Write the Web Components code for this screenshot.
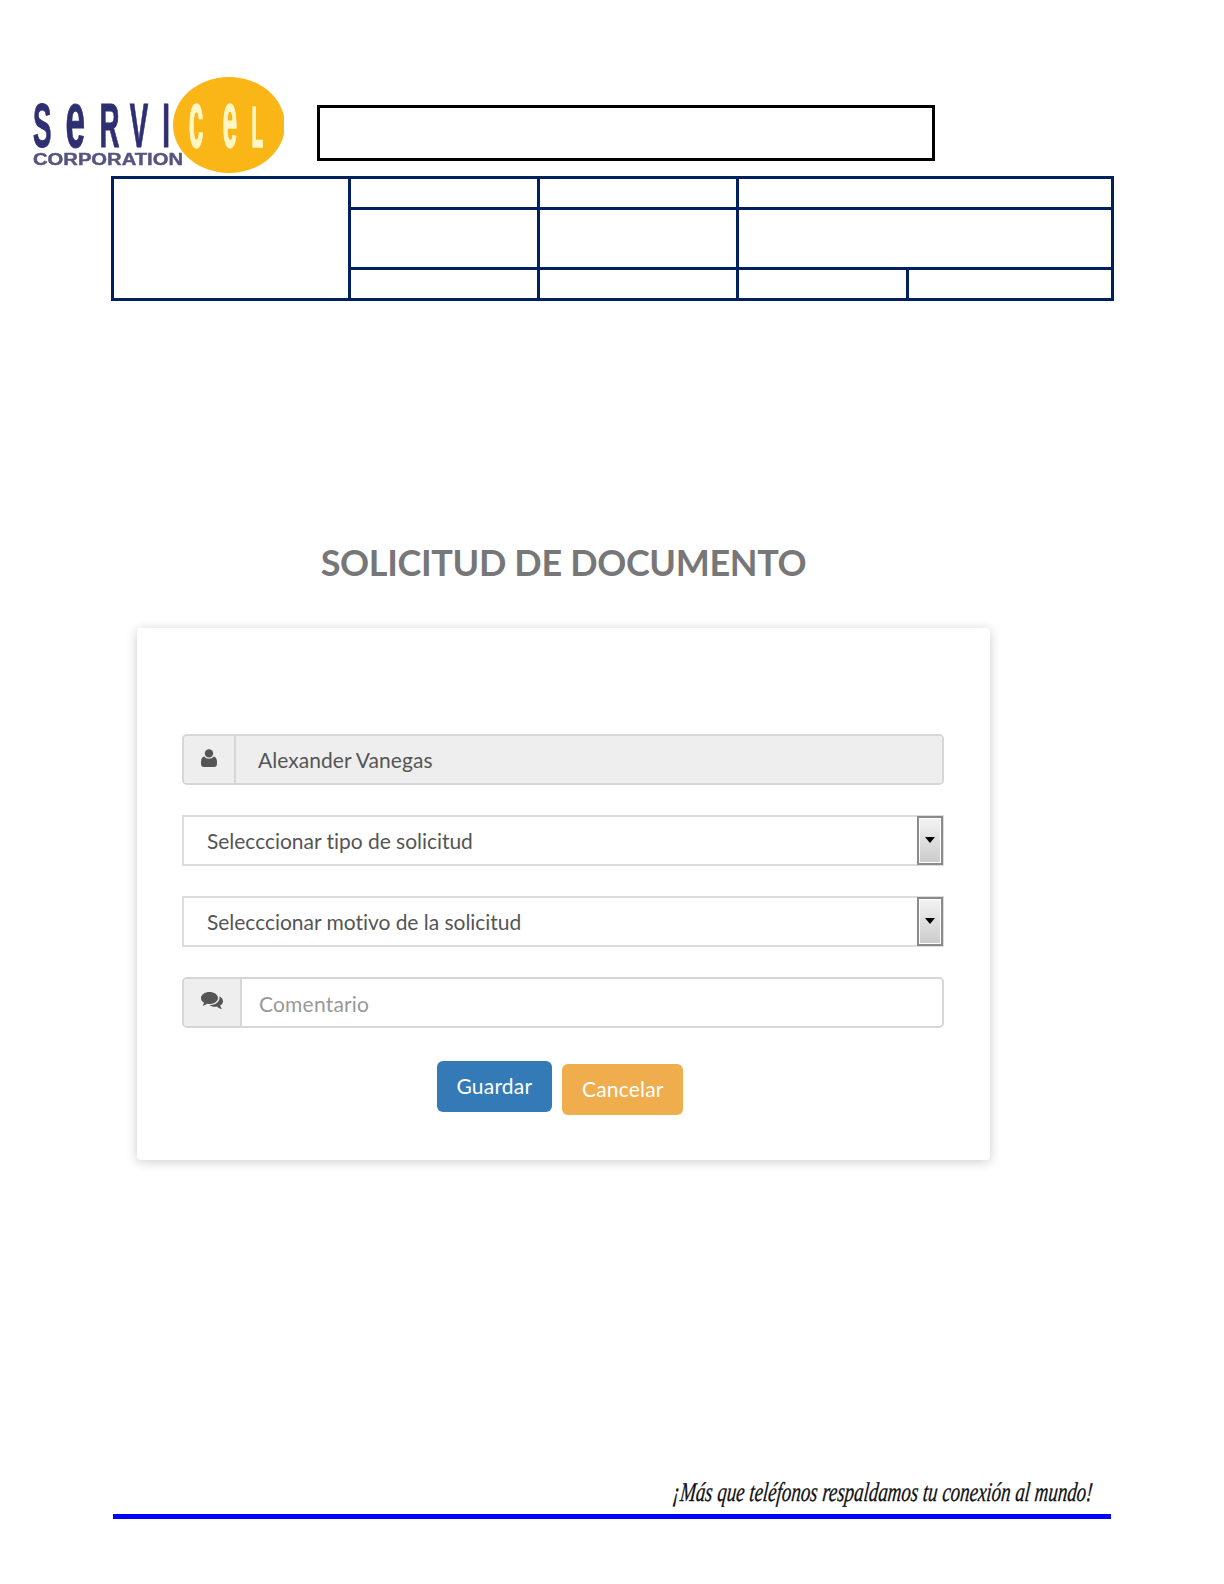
<!DOCTYPE html>
<html lang="es">
<head>
<meta charset="utf-8">
<title>Solicitud de documento</title>
<style>
  html, body { margin: 0; background: #fff; }
</style>
</head>
<body>
<doc-page>
  <doc-header></doc-header>
  <doc-grid></doc-grid>
  <form-card heading="SOLICITUD DE DOCUMENTO">
    <form-field icon="user" value="Alexander Vanegas" readonly></form-field>
    <select-field>Selecccionar tipo de solicitud</select-field>
    <select-field>Selecccionar motivo de la solicitud</select-field>
    <form-field icon="comments" placeholder="Comentario"></form-field>
    <div slot="actions">
      <ui-button kind="primary">Guardar</ui-button>
      <ui-button kind="warning">Cancelar</ui-button>
    </div>
  </form-card>
  <doc-footer>¡Más que teléfonos respaldamos tu conexión al mundo!</doc-footer>
</doc-page>

<script>
class DocPage extends HTMLElement {
  constructor() {
    super();
    this.attachShadow({ mode: 'open' });
    this.shadowRoot.innerHTML = `
      <style>
        :host { display: block; width: 1224px; height: 1584px; padding-top: 57px; box-sizing: border-box; overflow: hidden; }
      </style>
      <slot></slot>`;
  }
}

class DocHeader extends HTMLElement {
  constructor() {
    super();
    this.attachShadow({ mode: 'open' });
    this.shadowRoot.innerHTML = `
      <style>
        :host { display: flex; height: 116px; padding-left: 32px; }
        svg { display: block; flex-shrink: 0; }
        .box { width: 618px; height: 56px; box-sizing: border-box; margin: 48px 0 0 33px; border: 3px solid #000; }
        text { font-family: "Liberation Sans", sans-serif; font-weight: 700; }
      </style>
      <svg width="252" height="116" viewBox="32 57 252 116" aria-label="Servicel Corporation">
        <defs><filter id="soft" x="-5%" y="-5%" width="110%" height="110%"><feGaussianBlur stdDeviation="0.7"/></filter></defs>
        <g filter="url(#soft)">
          <g transform="scale(.44 1)" fill="#2f2e73" stroke="#2f2e73" stroke-width="1">
            <text y="147" font-size="63"><tspan x="75">S</tspan><tspan x="149" font-size="80">e</tspan><tspan x="226">R</tspan><tspan x="295">V</tspan><tspan x="369">I</tspan></text>
          </g>
          <text x="33" y="164.500" font-size="16" fill="#55547f" stroke="#55547f" stroke-width=".4" textLength="150" lengthAdjust="spacingAndGlyphs">CORPORATION</text>
          <ellipse cx="229" cy="125" rx="56" ry="48" fill="#f9b617"/>
          <g transform="scale(.33 1)" fill="#fff6c4" stroke="#fff6c4" stroke-width="1.500">
            <text y="147" font-size="80"><tspan x="572">c</tspan><tspan x="674">e</tspan><tspan x="762" font-size="58">L</tspan></text>
          </g>
        </g>
      </svg>
      <div class="box"></div>`;
  }
}

class DocGrid extends HTMLElement {
  constructor() {
    super();
    this.attachShadow({ mode: 'open' });
    this.shadowRoot.innerHTML = `
      <style>
        :host {
          display: grid;
          grid-template-columns: 234px 186px 196px 167px 202px;
          grid-template-rows: 28px 57px 28px;
          gap: 3px;
          width: 1003px;
          height: 125px;
          box-sizing: border-box;
          margin: 3px 0 0 111px;
          padding: 3px;
          background: #002060;
        }
        div { background: #fff; }
        .logo { grid-row: span 3; }
        .wide { grid-column: span 2; }
      </style>
      <div class="logo"></div>
      <div></div><div></div><div class="wide"></div>
      <div></div><div></div><div class="wide"></div>
      <div></div><div></div><div></div><div></div>`;
  }
}

class FormCard extends HTMLElement {
  constructor() {
    super();
    this.attachShadow({ mode: 'open' });
    this.shadowRoot.innerHTML = `
      <style>
        :host { display: block; width: 853px; margin: 241px 0 0 137px; font-family: Lato, sans-serif; }
        h1 { margin: 0 0 46px; font-size: 36px; line-height: 40px; font-weight: 700; letter-spacing: -.35px; color: #777; text-align: center; }
        .card {
          height: 532px;
          box-sizing: border-box;
          padding: 106px 46px 0 45px;
          background: #fff;
          border-radius: 4px;
          box-shadow: 0 2px 12px rgba(0,0,0,.2);
        }
        .fields { display: flex; flex-direction: column; gap: 30px; }
        .actions { margin: 33px 0 0 255px; }
      </style>
      <h1></h1>
      <div class="card">
        <div class="fields"><slot></slot></div>
        <div class="actions"><slot name="actions"></slot></div>
      </div>`;
    this.shadowRoot.querySelector('h1').textContent = this.getAttribute('heading');
  }
}

const ICONS = {
  user: `<svg width="16" height="18" viewBox="0 0 16 18"><circle cx="8" cy="4.400" r="4.200" fill="#555"/><path d="M3.200 7.600C4.400 9 6 9.800 8 9.800s3.600-.8 4.800-2.200c2 .3 3.200 2.300 3.200 5.600V15c0 1.800-1.200 3-2.800 3H2.800C1.200 18 0 16.800 0 15v-1.800c0-3.300 1.200-5.300 3.200-5.600z" fill="#555"/></svg>`,
  comments: `<svg width="22" height="18" viewBox="0 0 22 18"><path d="M8.500 0C13.200 0 17 2.700 17 6s-3.800 6-8.500 6c-.9 0-1.700-.1-2.500-.3C4.800 12.800 3.300 13.500 1.500 13.700c.8-.9 1.300-1.800 1.500-3C1.100 9.600 0 7.900 0 6c0-3.300 3.800-6 8.500-6z" fill="#555"/><path d="M18.500 4.500C20.600 5.500 22 7.200 22 9.200c0 1.800-1.100 3.300-2.800 4.400.2 1.300.8 2.300 1.800 3.400-2-.2-3.700-1.100-5-2.500-.7.2-1.500.3-2.300.3-2.200 0-4.100-.7-5.400-1.800 5.600.2 10.200-3.100 10.200-7.100 0-.5-.1-.9-.2-1.400z" fill="#555"/></svg>`,
};

class FormField extends HTMLElement {
  constructor() {
    super();
    this.attachShadow({ mode: 'open' });
    const readonly = this.hasAttribute('readonly');
    this.shadowRoot.innerHTML = `
      <style>
        :host { display: flex; height: 51px; box-sizing: border-box; border: 2px solid #d6d6d6; border-radius: 5px; overflow: hidden; font: 21px/49px Lato, sans-serif; font-variant-ligatures: none; }
        .addon { display: flex; align-items: center; justify-content: center; flex-shrink: 0; background: #eee; border-right: 2px solid #d6d6d6; }
        .addon svg { display: block; margin-top: -3px; }
        .value { flex: 1; }
        .ro { background: #eee; color: #555; padding-left: 22px; letter-spacing: .05px; line-height: 47px; }
        .ph { background: #fff; color: #999; padding-left: 17px; letter-spacing: .2px; }
      </style>
      <div class="addon" style="width:${readonly ? 50 : 56}px">${ICONS[this.getAttribute('icon')]}</div>
      <div class="value ${readonly ? 'ro' : 'ph'}">${this.getAttribute('value') || this.getAttribute('placeholder')}</div>`;
  }
}

class SelectField extends HTMLElement {
  constructor() {
    super();
    this.attachShadow({ mode: 'open' });
    this.shadowRoot.innerHTML = `
      <style>
        :host { display: flex; height: 51px; box-sizing: border-box; border: 2px solid #dcdcdc; border-right-width: 1px; font: 21px/47px Lato, sans-serif; font-variant-ligatures: none; letter-spacing: -.03px; color: #555; background: #fff; }
        .label { flex: 1; padding-left: 23px; }
        .arrow {
          display: flex; align-items: center; justify-content: center;
          width: 26px; box-sizing: border-box; margin: -1px 0 -1px;
          border: 2px solid #8a8a8a;
          box-shadow: inset 0 0 0 1px #fff;
          background: linear-gradient(#f3f3f3, #cbcbcb);
        }
        .arrow i { display: block; margin-top: -1px; border: 5px solid transparent; border-top: 6px solid #000; border-bottom: 0; }
      </style>
      <div class="label"><slot></slot></div>
      <div class="arrow"><i></i></div>`;
  }
}

class UiButton extends HTMLElement {
  constructor() {
    super();
    this.attachShadow({ mode: 'open' });
    this.shadowRoot.innerHTML = `
      <style>
        :host { display: inline-block; height: 51px; padding: 0 19.5px; border-radius: 6px; font: 21px/50px Lato, sans-serif; letter-spacing: .2px; color: #fff; vertical-align: top; }
        :host([kind="primary"]) { background: #337ab7; }
        :host([kind="warning"]) { background: #f0ad4e; margin: 3px 0 0 6.5px; }
      </style>
      <slot></slot>`;
  }
}

class DocFooter extends HTMLElement {
  constructor() {
    super();
    this.attachShadow({ mode: 'open' });
    this.shadowRoot.innerHTML = `
      <style>
        :host { display: block; width: 998px; margin: 319px 0 0 113px; }
        p { margin: 0; height: 35px; padding-right: 18px; text-align: right; white-space: nowrap; }
        span { display: inline-block; transform-origin: right center; transform: translateY(-4px) scaleX(.7) skewX(-8deg); font: italic 400 27px/35px "Liberation Serif", serif; -webkit-text-stroke: .3px #111; color: #111; }
        .line { height: 5px; background: #00f; }
      </style>
      <p><span><slot></slot></span></p>
      <div class="line"></div>`;
  }
}

customElements.define('doc-page', DocPage);
customElements.define('doc-header', DocHeader);
customElements.define('doc-grid', DocGrid);
customElements.define('form-card', FormCard);
customElements.define('form-field', FormField);
customElements.define('select-field', SelectField);
customElements.define('ui-button', UiButton);
customElements.define('doc-footer', DocFooter);
</script>
</body>
</html>
